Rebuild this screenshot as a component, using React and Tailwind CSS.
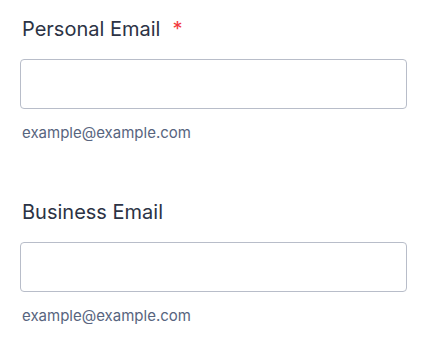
export default function App() {
  const Field = ({ label, required }) => (
    <div className="flex flex-col">
      <label className="text-[20px] leading-[28px] text-[#2c3345] flex items-center pl-[2px]">
        {label}
        {required && <span className="text-[#f23a3c] ml-[12px]">*</span>}
      </label>
      <div className="mt-[16px] h-[50px] w-[387px] rounded-[4px] border border-[#b8bdc9] bg-white" />
      <div className="mt-[14px] text-[15px] leading-[20px] text-[#57647e] pl-[2px]">example@example.com</div>
    </div>
  );
  return (
    <div className="w-[427px] h-[343px] bg-white pt-[15px] pl-[20px]" style={{ fontFamily: "Inter, sans-serif" }}>
      <div className="flex flex-col gap-[55px]">
        <Field label="Personal Email" required />
        <Field label="Business Email" />
      </div>
    </div>
  );
}
